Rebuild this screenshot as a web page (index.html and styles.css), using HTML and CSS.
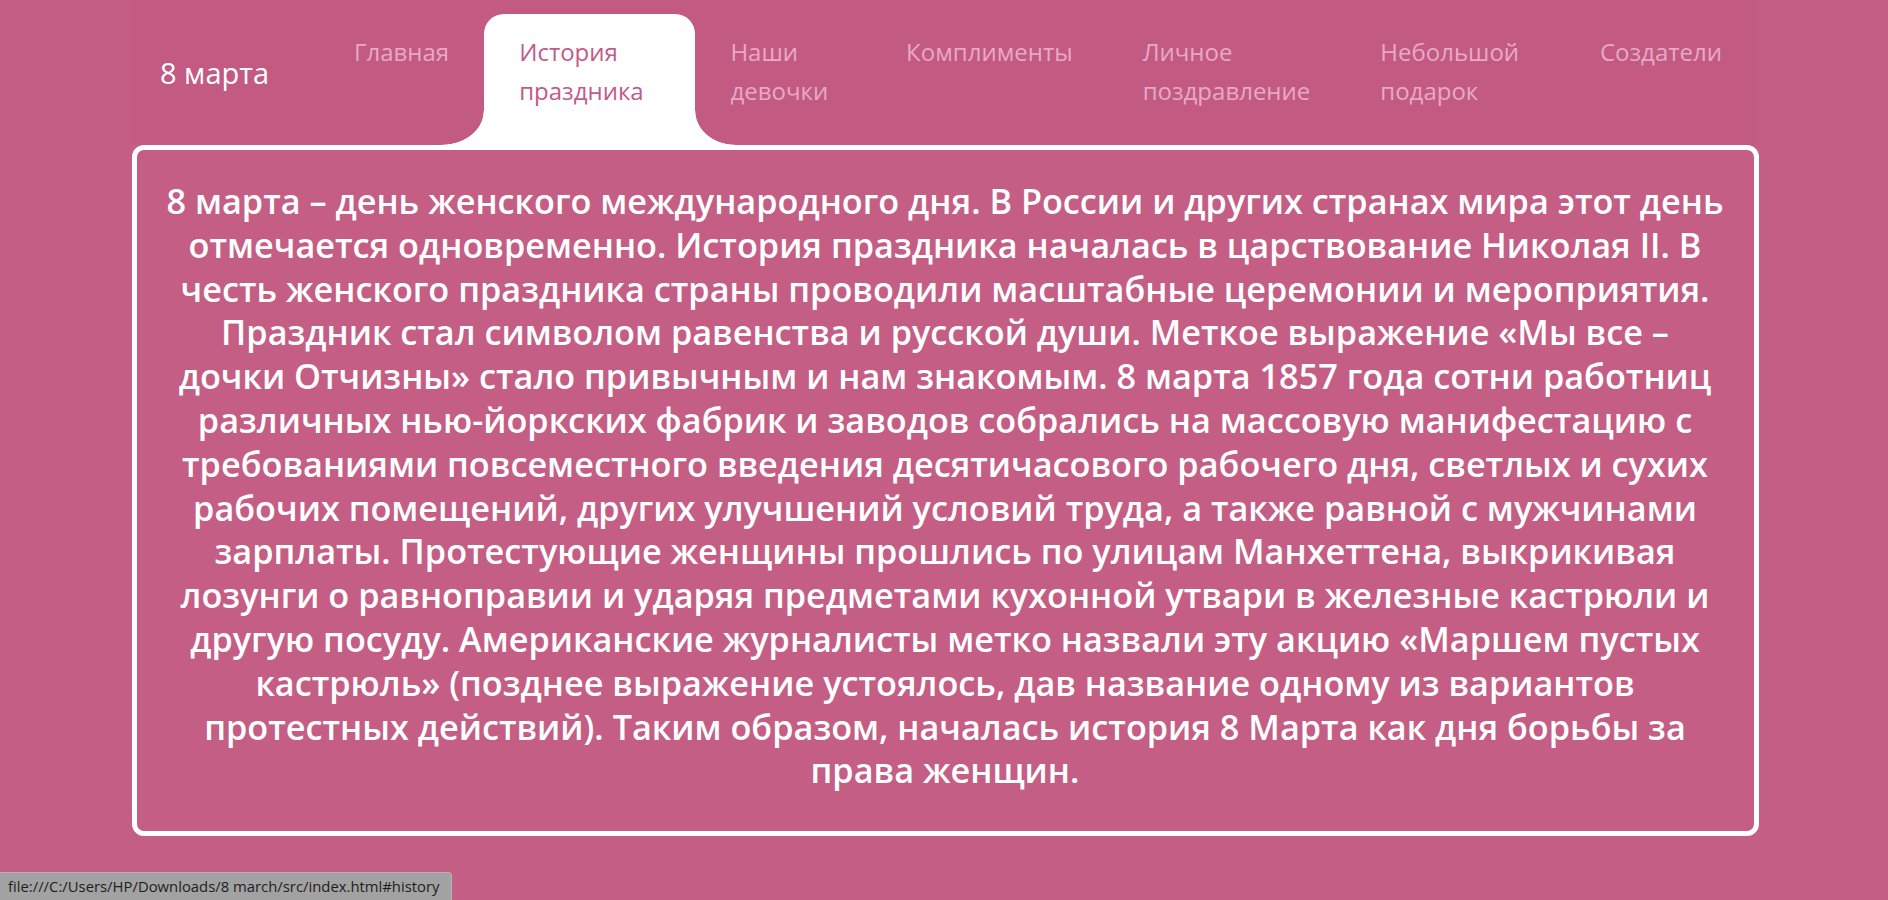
FILE: index.html
```html
<!DOCTYPE html>
<html lang="ru">
<head>
<meta charset="utf-8">
<title>8 марта</title>
<link rel="stylesheet" href="styles.css">
</head>
<body>
<header class="topbar">
  <div class="logo">8 марта</div>
  <nav class="menu">
    <a class="menu-item" href="#main">Главная</a>
    <a class="menu-item active" href="#history">История праздника</a>
    <a class="menu-item" href="#girls">Наши девочки</a>
    <a class="menu-item" href="#compliments">Комплименты</a>
    <a class="menu-item" href="#personal">Личное поздравление</a>
    <a class="menu-item" href="#gift">Небольшой подарок</a>
    <a class="menu-item" href="#authors">Создатели</a>
  </nav>
</header>
<main class="content">
  <section class="story" id="history">
    <p class="story-text">8 марта – день женского международного дня. В России и других странах мира этот день отмечается одновременно. История праздника началась в царствование Николая II. В честь женского праздника страны проводили масштабные церемонии и мероприятия. Праздник стал символом равенства и русской души. Меткое выражение «Мы все – дочки Отчизны» стало привычным и нам знакомым. 8 марта 1857 года сотни работниц различных нью-йоркских фабрик и заводов собрались на массовую манифестацию с требованиями повсеместного введения десятичасового рабочего дня, светлых и сухих рабочих помещений, других улучшений условий труда, а также равной с мужчинами зарплаты. Протестующие женщины прошлись по улицам Манхеттена, выкрикивая лозунги о равноправии и ударяя предметами кухонной утвари в железные кастрюли и другую посуду. Американские журналисты метко назвали эту акцию «Маршем пустых кастрюль» (позднее выражение устоялось, дав название одному из вариантов протестных действий). Таким образом, началась история 8 Марта как дня борьбы за права женщин.</p>
  </section>
</main>
<div class="statusbar">file:///C:/Users/HP/Downloads/8 march/src/index.html#history</div>
</body>
</html>
```
FILE: styles.css
```css
html, body {
  margin: 0;
  padding: 0;
}
body {
  background: #c45e84;
  font-family: "Open Sans", "Noto Sans", sans-serif;
  color: #fff;
  min-height: 900px;
}
.topbar {
  width: 1626px;
  height: 145px;
  margin: 0 auto;
  display: flex;
  background: #c25a82;
}
.logo {
  flex: 0 0 188px;
  box-sizing: border-box;
  padding-left: 29px;
  align-self: center;
  font-size: 29px;
  line-height: 38px;
  color: #fff;
}
.menu {
  flex: 1;
  display: flex;
  padding-top: 14px;
  min-width: 0;
}
.menu-item {
  position: relative;
  display: block;
  padding: 18px 35px 0;
  font-size: 24px;
  line-height: 39px;
  color: #e8a9c5;
  text-decoration: none;
  border-radius: 20px 20px 0 0;
}
.menu-item.active {
  background: #fff;
  color: #c25a8a;
}
.menu-item.active::before,
.menu-item.active::after {
  content: "";
  position: absolute;
  bottom: 0;
  width: 42px;
  height: 34px;
}
.menu-item.active::before {
  left: -42px;
  background: radial-gradient(ellipse 42px 34px at 0 0, transparent 98%, #fff 100%);
}
.menu-item.active::after {
  right: -40px;
  width: 40px;
  background: radial-gradient(ellipse 40px 34px at 100% 0, transparent 98%, #fff 100%);
}
.content {
  width: 1627px;
  margin: 0 auto;
  padding-left: 2px;
}
.story {
  border: 5px solid #fff;
  border-radius: 12px;
  padding: 29px 28px 39px;
}
.story-text {
  margin: 0;
  font-size: 34.25px;
  font-weight: 600;
  line-height: 43.8px;
  text-align: center;
  color: #fff;
}
.statusbar {
  position: fixed;
  left: 0;
  bottom: 0;
  height: 28px;
  padding: 0 11px 0 8px;
  background: #a2a2a2;
  border-top: 1px solid #b4b4b4;
  border-right: 1px solid #b4b4b4;
  border-top-right-radius: 4px;
  box-sizing: border-box;
  font-family: "Open Sans", sans-serif;
  font-size: 14.85px;
  line-height: 27px;
  color: #1e1e1e;
}
```
